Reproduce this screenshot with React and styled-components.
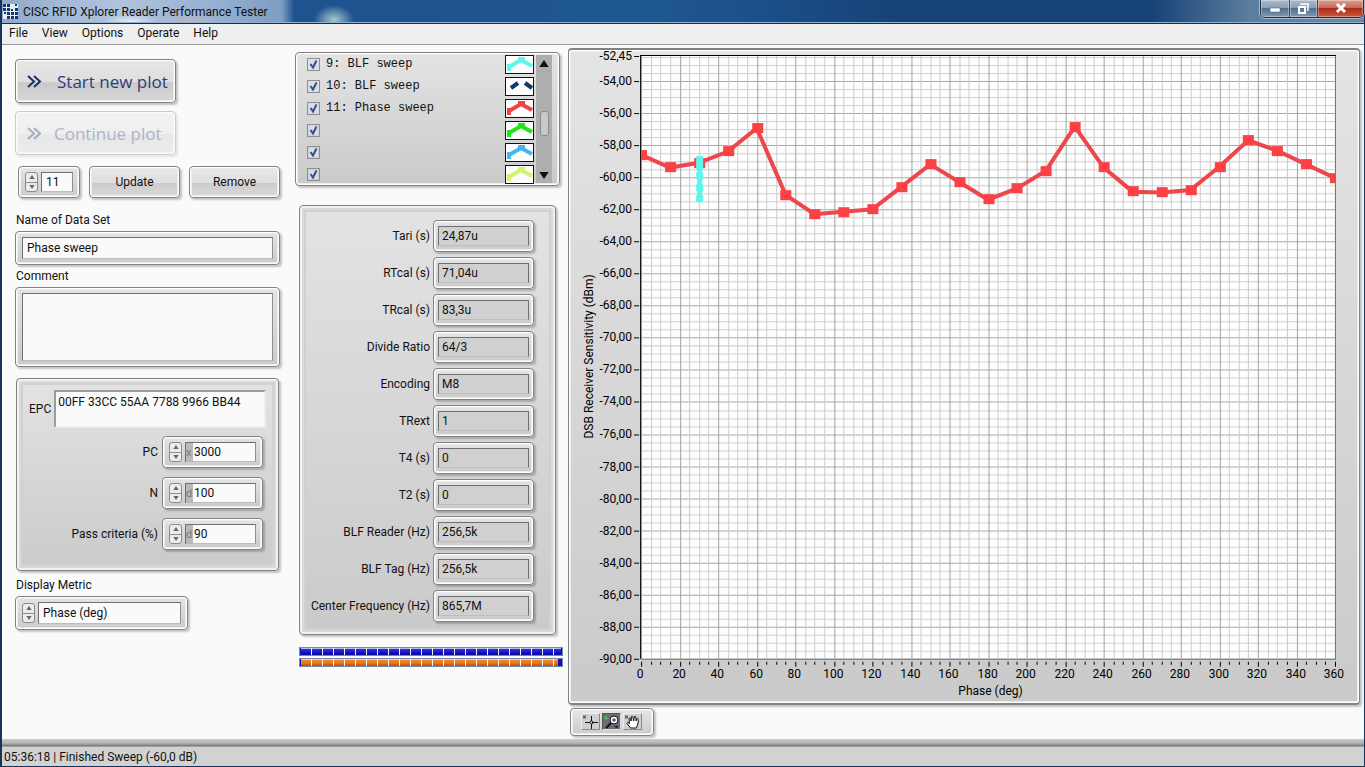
import { useState } from "react";
import styled, { createGlobalStyle, css } from "styled-components";

const colors = {
  page: "#fafafa",
  ink: "#111",
  blue: "#2f3d7c",
  frame: "#828282",
  red: "#fb4146",
  cyan: "#5ff5ea",
}

const GlobalStyle = createGlobalStyle`
  * {
    box-sizing: border-box;
  }

  body {
    margin: 0;
    background: ${colors.page};
    color: ${colors.ink};
    font: 12px/16px Roboto, "Open Sans", sans-serif;
  }

  button, input, textarea, select {
    font: inherit;
    color: inherit;
    margin: 0;
  }
`

const Window = styled.div`
  display: flex;
  flex-direction: column;
  min-height: 100vh;
  border: solid #16335a;
  border-width: 0 1px 1px 2px;
`

const TitleBar = styled.header`
  display: flex;
  align-items: center;
  gap: 5px;
  height: 24px;
  padding-left: 1px;
  border-bottom: 1px solid #12304f;
  box-shadow: inset 0 -1px #8fb0cf;
  background:
    radial-gradient(ellipse 20px 15px at 332px 20px, #a9c9cf, transparent),
    radial-gradient(ellipse 28px 8px at 128px 22px, #e2eff8, transparent),
    radial-gradient(ellipse 30px 10px at 190px 22px, #b9b6c6, transparent),
    linear-gradient(90deg, #8fa9c8 0, #a3b9d6 60px, #b0c3dc 120px, #93aecf 220px, #7d9dc2 280px, #1e538f 292px, #1e538f 430px, #1f5890 640px, #1b4f8a 760px, #174276 900px, #174276 1150px, #5d7f9f 1250px, #6a87a3 100%);
`

const AppName = styled.h1`
  flex: 1;
  margin: 0;
  font-size: 12px;
  font-weight: 400;
  line-height: 22px;
`

const Caption = styled.div`
  display: flex;
  align-self: flex-start;
  height: 18px;
  border: 1px solid #1c2f45;
  border-top: 0;
  border-radius: 0 0 5px 5px;
  box-shadow: 0 0 0 1px #a8bccf;
  overflow: hidden;
`

const CaptionButton = styled.button`
  display: flex;
  align-items: center;
  justify-content: center;
  width: ${props => props.$close ? "46px" : "28px"};
  padding: 0 0 1px;
  border: 0;
  border-left: 1px solid #33495f;
  box-shadow: inset 0 0 0 1px rgba(255, 255, 255, 0.35);
  background: ${props => props.$close
    ? "linear-gradient(#dba093 0, #c9695a 45%, #b02a18 50%, #c9563c 100%)"
    : "linear-gradient(#a9bacb 0, #8ba0b6 45%, #54708e 50%, #7f9ab3 100%)"};

  &:first-child {
    border-left: 0;
  }
`

const MenuBar = styled.nav`
  display: flex;
  gap: 14px;
  height: 21px;
  padding: 0 7px;
  background: #efefef;
  border-bottom: 1px solid #9b9b9b;

  a {
    color: inherit;
    line-height: 18px;
    text-decoration: none;
  }
`

const Content = styled.main`
  display: flex;
  flex: 1;
  align-items: flex-start;
  padding: 3px 4px 2px 13px;
`

const SideColumn = styled.section`
  display: flex;
  flex: none;
  flex-direction: column;
  align-items: flex-start;
  width: 265px;
  padding-top: 11px;
`

const MiddleColumn = styled.section`
  flex: none;
  width: 268px;
  margin: 4px 5px 0 15px;
`

const ChartColumn = styled.section`
  flex: 1;
  min-width: 0;
`

const raised = css`
  border: 1px solid ${colors.frame};
  border-radius: 4px;
  box-shadow: inset 0 0 0 1px #fff, inset 0 0 0 2px #ececec, 2px 2px 2px rgba(0, 0, 0, 0.22);
`

const BigButton = styled.button`
  display: flex;
  align-items: center;
  gap: 14px;
  width: 161px;
  height: 44px;
  margin-bottom: 8px;
  padding: 2px 0 0 10px;
  white-space: nowrap;
  ${raised}
  background: linear-gradient(#e6e6e6 0, #dedede 52%, #c9c9c9 54%, #d8d8d8 100%);
  color: ${colors.blue};
  font: 17px/24px "Open Sans", "Noto Sans", sans-serif;

  &:disabled {
    gap: 11px;
    opacity: 0.38;
  }
`

const PushButton = styled.button`
  width: 91px;
  height: 32px;
  padding: 0;
  ${raised}
  background: linear-gradient(#e8e8e8 0, #dedede 52%, #cbcbcb 54%, #dadada 100%);
`

const ButtonRow = styled.div`
  display: flex;
  gap: 9px;
  margin: 3px 0 11px 3px;
`

const Bezel = styled.div`
  display: flex;
  align-items: center;
  gap: 3px;
  width: ${props => props.$width || "100%"};
  height: ${props => props.$height || "32px"};
  padding: ${props => props.$slim ? "5px 4px" : "5px 6px"};
  ${raised}
  background: linear-gradient(#e4e4e4, #cbcbcb);
`

const SpinButtons = styled.span`
  display: flex;
  flex: none;
  flex-direction: column;
  width: 13px;
  height: 20px;
  border: 1px solid #8c8c8c;
  border-radius: 3px;
  background: #ececec;
  color: #666;
  overflow: hidden;

  button {
    display: flex;
    flex: 1;
    align-items: center;
    justify-content: center;
    padding: 0;
    border: 0;
    background: transparent;
  }

  button + button {
    border-top: 1px solid #8c8c8c;
  }
`

const fieldLook = css`
  flex: 1;
  align-self: stretch;
  min-width: 0;
  border: 1px solid #777;
  border-color: #6f6f6f #8f8f8f #bdbdbd #6f6f6f;
  border-radius: 0;
  outline: 0;
`

const Field = styled.input`
  ${fieldLook}
  padding: 0 4px;
  background: #fafafa;

  &:read-only {
    padding: 0 3px;
    border-color: #6f6f6f #6f6f6f #bdbdbd #6f6f6f;
    background: #d0d0d0;
  }
`

const Radix = styled.span`
  flex: none;
  align-self: stretch;
  width: 8px;
  margin-right: -3px;
  border: solid #6f6f6f;
  border-width: 1px 0 0 1px;
  background: #b9b9b9;
  color: #777;
  font-size: 11px;
  line-height: 19px;

  & + input {
    padding-left: 1px;
    border-left: 0;
  }
`

const Area = styled.textarea`
  ${fieldLook}
  padding: 0 4px;
  background: #fafafa;
  resize: none;
`

const Metric = styled.select`
  ${fieldLook}
  appearance: none;
  padding: 0 4px;
  background: #fafafa;
`

const FieldLabel = styled.label`
  display: block;
  height: 16px;
  margin: 3px 0 3px 1px;
`

const Cluster = styled.div`
  ${raised}
  box-shadow: inset 0 0 0 2px #f2f2f2, inset 0 0 0 4px #d9d9d9, inset 0 0 0 6px #d0d0d0, 2px 2px 2px rgba(0, 0, 0, 0.22);
  background: linear-gradient(#e3e3e3, #cacaca);
`

const TagCluster = styled(Cluster)`
  width: 263px;
  height: 193px;
  margin: 11px 0 3px 1px;
  padding: 11px 12px;
`

const EpcRow = styled.div`
  display: flex;
  align-items: center;
  gap: 3px;
  height: 38px;
  margin-bottom: 8px;

  textarea {
    height: 38px;
    padding: 2px;
    border: 2px solid #9c9c9c;
    border-color: #9c9c9c #ededed #ededed #9c9c9c;
  }
`

const NumberRow = styled.div`
  display: flex;
  align-items: center;
  justify-content: flex-end;
  gap: 4px;
  margin: 0 3px 9px 0;
`

const TraceList = styled.div`
  display: flex;
  width: 265px;
  height: 134px;
  padding: 0 7px 0 11px;
  ${raised}
  background: linear-gradient(#e3e3e3, #cacaca);
`

const Traces = styled.ul`
  flex: 1;
  margin: 0;
  padding: 0;
  list-style: none;
`

const Trace = styled.li`
  display: flex;
  align-items: center;
  height: 22px;
  padding-right: 2px;

  label {
    display: flex;
    flex: 1;
    align-items: center;
    gap: 6px;
    font: 12px/16px "Liberation Mono", monospace;
  }
`

const Tick = styled.input`
  appearance: none;
  width: 13px;
  height: 13px;
  border: 1px solid #8e8f8f;
  background: #f4f5f8;

  &:checked {
    background: url("data:image/svg+xml,%3Csvg xmlns='http://www.w3.org/2000/svg' viewBox='0 0 11 11'%3E%3Crect x='1' y='1' width='9' height='9' fill='%23d5dcea'/%3E%3Cpath d='M2.5 5L5 8.5L8.5 1.5' fill='none' stroke='%233b4f86' stroke-width='2'/%3E%3C/svg%3E");
  }
`

const Scroll = styled.div`
  display: flex;
  flex-direction: column;
  align-items: center;
  width: 16px;
  margin: 2px 0;
  background: #aeaeae;

  button {
    width: 16px;
    height: 16px;
    padding: 0;
    border: 0;
    background: transparent;
    line-height: 0;
  }
`

const Thumb = styled.span`
  width: 9px;
  height: 25px;
  margin: 40px 0 auto;
  border: 1px solid #8b8b8b;
  border-radius: 3px;
  background: #c9c9c9;
`

const Timing = styled(Cluster)`
  display: flex;
  flex-direction: column;
  gap: 5px;
  width: 257px;
  height: 430px;
  margin: 19px 0 12px 4px;
  padding: 14px 21px 0 0;
`

const TimingRow = styled.div`
  display: flex;
  align-items: center;
  justify-content: flex-end;
  gap: 3px;
`

const Gauge = styled.div`
  width: 264px;
  height: 9px;
  margin: 0 0 2px 4px;
  padding: 0 1px;
  border: 1px solid #7c86a8;
  background: #1212b4;
`

const GaugeFill = styled.div`
  height: 100%;
  background:
    repeating-linear-gradient(90deg, transparent 0 10px, #f4f4fb 10px 11px),
    ${props => props.$orange ? "linear-gradient(#d8cfc8 1px, #f08a35 1px, #e8761c 60%, #a85514)" : "linear-gradient(#b9bde0 1px, #2a35e0 1px, #1313d0 60%, #0a0a90)"};
`

const ChartPanel = styled.div`
  ${raised}
  border-width: 2px 1px 2px 1px;
  padding: 0 1px;
  background: linear-gradient(#e4e4e4, #cacaca);

  svg {
    display: block;
    width: 100%;
    height: auto;
    overflow: visible;
  }
`

const Palette = styled.div`
  display: flex;
  align-items: center;
  gap: 2px;
  width: 84px;
  height: 28px;
  margin: 3px 0 0 2px;
  padding-left: 10px;
  ${raised}
  background: linear-gradient(#e6e6e6, #cccccc);
`

const Tool = styled.button`
  width: 19px;
  height: 17px;
  padding: 0;
  border: 1px solid #eee;
  border-color: ${props => props.$active ? "#555 #ddd #ddd #555" : "#eee #888 #888 #eee"};
  background: ${props => props.$active ? "#6c6c74" : "#cfcfcf"};
  line-height: 0;
`

const StatusBar = styled.footer`
  height: 27px;
  padding: 10px 0 0 2px;
  background: linear-gradient(#cbcbcb 0, #b5b5b5 4px, #8f8f8f 6px, #6f6f6f 7px, #d2d2d2 8px, #d2d2d2 100%);
`

const timings = [
  ["Tari (s)", "24,87u"],
  ["RTcal (s)", "71,04u"],
  ["TRcal (s)", "83,3u"],
  ["Divide Ratio", "64/3"],
  ["Encoding", "M8"],
  ["TRext", "1"],
  ["T4 (s)", "0"],
  ["T2 (s)", "0"],
  ["BLF Reader (Hz)", "256,5k"],
  ["BLF Tag (Hz)", "256,5k"],
  ["Center Frequency (Hz)", "865,7M"],
]

const traces = [
  { name: "9: BLF sweep", color: colors.cyan },
  { name: "10: BLF sweep", color: "#17376b", dashed: true },
  { name: "11: Phase sweep", color: "#ee4449" },
  { name: "", color: "#1fe51f" },
  { name: "", color: "#4ab4ee" },
  { name: "", color: "#cdf56e" },
]

// sensitivity in dBm, one sample every 15 degrees
const sweep = [
  -58.6, -59.4, -59.1, -58.4, -56.95, -61.1, -62.3, -62.15, -62.0, -60.6, -59.2, -60.3, -61.4,
  -60.7, -59.6, -56.85, -59.4, -60.9, -60.95, -60.8, -59.35, -57.7, -58.35, -59.2, -60.05,
]

const blf = [-58.9, -59.3, -59.9, -60.6, -61.3]

const plot = { left: 71, top: 6, width: 693, height: 602 }
plot.right = plot.left + plot.width
plot.bottom = plot.top + plot.height

const toX = deg => plot.left + deg * (plot.width / 360)
const toY = dbm => plot.top + (-52.45 - dbm) * (plot.height / 37.55)
const crisp = value => Math.round(value) + 0.5

function range(from, to, step) {
  const out = []
  for (let value = from; value <= to; value += step) out.push(value)
  return out
}

function Chart() {
  const degs = range(0, 360, 5)
  const levels = range(-90, -52.5, 0.5)
  const labels = [-52.45, ...range(-90, -54, 2)]

  return (
    <svg viewBox="0 0 787 652" role="img" aria-label="DSB Receiver Sensitivity over Phase">
      <clipPath id="plot-area">
        <rect x={plot.left} y={plot.top} width={plot.width} height={plot.height} />
      </clipPath>
      <rect x={plot.left} y={plot.top} width={plot.width} height={plot.height} fill="#fdfdfd" />
      {levels.map(v => (
        <path key={v} d={`M${plot.left} ${crisp(toY(v))}H${plot.right}`} stroke={v % 2 === 0 ? "#a9a9a9" : "#d0d0d0"} />
      ))}
      {degs.map(v => (
        <path key={v} d={`M${crisp(toX(v))} ${plot.top}V${plot.bottom}`} stroke={v % 20 === 0 ? "#a3a3a3" : "#cbcbcb"} />
      ))}
      <path d={`M${plot.left} ${plot.bottom}.5H${plot.right}.5V${plot.top}`} fill="none" stroke="#777" />
      <path d={`M70.5 ${plot.bottom}V5.5H${plot.right + 1}`} fill="none" stroke="#000" />
      {labels.map(v => (
        <g key={v}>
          <path d={`M64 ${crisp(toY(v))}H69`} stroke="#000" />
          <text x="62" y={Math.round(toY(v)) + 4} textAnchor="end">{v.toFixed(2).replace(".", ",")}</text>
        </g>
      ))}
      {degs.map(v => (
        <path key={v} d={`M${crisp(toX(v))} 611V${v % 20 === 0 ? 616 : 614}`} stroke="#000" />
      ))}
      {range(0, 360, 20).map(v => (
        <text key={v} x={Math.round(toX(v)) - 1} y="627" textAnchor="middle">{v}</text>
      ))}
      <text x="420" y="644" textAnchor="middle">Phase (deg)</text>
      <text transform="translate(23 306) rotate(-90)" textAnchor="middle">DSB Receiver Sensitivity (dBm)</text>
      <g clipPath="url(#plot-area)">
        <polyline points={sweep.map((v, i) => `${toX(i * 15)},${toY(v)}`).join(" ")} fill="none" stroke="#ec474b" strokeWidth="4" />
        {sweep.map((v, i) => (
          <rect key={i} x={Math.round(toX(i * 15)) - 5} y={Math.round(toY(v)) - 5} width="11" height="10" fill={colors.red} />
        ))}
        <path d={`M${crisp(toX(30))} ${toY(-58.9)}V${toY(-61.3)}`} stroke={colors.cyan} strokeWidth="5" />
        {blf.map(v => (
          <rect key={v} x={Math.round(toX(30)) - 3} y={Math.round(toY(v)) - 3} width="7" height="7" fill={colors.cyan} />
        ))}
      </g>
    </svg>
  )
}

function Swatch({ color, dashed }) {
  return (
    <svg width="29" height="19">
      <rect x="0.5" y="0.5" width="28" height="18" fill="#fdfdfd" stroke="#111" />
      {dashed ? (
        <path d="M6 11L13 6M20 6L27 11" stroke={color} strokeWidth="4" />
      ) : (
        <>
          <path d="M4 12L16 5L27 11" fill="none" stroke={color} strokeWidth="4" />
          <path d="M2 9h4v7H2zM13 2h7v5h-7z" fill={color} />
        </>
      )}
    </svg>
  )
}

function Arrow({ down, size = 5 }) {
  return (
    <svg width={size * 2} height={size} viewBox="0 0 10 6" fill="currentColor">
      <path d={down ? "M1 0H9L5 6Z" : "M1 6H9L5 0Z"} />
    </svg>
  )
}

function Spinner({ label }) {
  return (
    <SpinButtons>
      <button type="button" aria-label={`Increase ${label}`}><Arrow size={4} /></button>
      <button type="button" aria-label={`Decrease ${label}`}><Arrow size={4} down /></button>
    </SpinButtons>
  )
}

function Chevrons() {
  return (
    <svg width="17" height="16" fill="none" stroke="#143469" strokeWidth="2">
      <path d="M2 2L8 7.500L2 13M8 2L14 7.500L8 13" />
    </svg>
  )
}

function NumberField({ id, label, radix, value }) {
  return (
    <NumberRow>
      <label htmlFor={id}>{label}</label>
      <Bezel $width="101px">
        <Spinner label={label} />
        <Radix>{radix}</Radix>
        <Field id={id} defaultValue={value} />
      </Bezel>
    </NumberRow>
  )
}

function TraceRow({ name, index, color, dashed }) {
  const [on, setOn] = useState(true)
  return (
    <Trace>
      <label>
        <Tick type="checkbox" aria-label={name || `Plot ${index + 9}`} checked={on} onChange={() => setOn(!on)} />
        {name}
      </label>
      <Swatch color={color} dashed={dashed} />
    </Trace>
  )
}

function Logo() {
  return (
    <svg width="15" height="15">
      <rect width="15" height="15" fill="#e8eef5" />
      <path
        d="M0 0h3v3H0zM4 0h3v3H4zM12 0h2v2h-2zM0 4h3v3H0zM4 4h3v3H4zM8 5h2v2H8zM12 4h3v3h-3zM1 8h2v2H1zM4 8h3v3H4zM8 8h3v3H8zM12 8h3v3h-3zM4 12h3v3H4zM8 12h3v3H8zM12 12h3v3h-3z"
        fill="#17366b"
      />
    </svg>
  )
}

export default function App() {
  return (
    <>
      <GlobalStyle />
      <Window>
        <TitleBar>
          <Logo />
          <AppName>CISC RFID Xplorer Reader Performance Tester</AppName>
          <Caption>
            <CaptionButton aria-label="Minimize">
              <svg width="12" height="12"><rect x="1" y="6" width="10" height="4" fill="#fff" stroke="#44566a" strokeWidth="0.5" /></svg>
            </CaptionButton>
            <CaptionButton aria-label="Restore">
              <svg width="13" height="13" fill="none" stroke="#fff" strokeWidth="2">
                <path d="M4 3V2H11V8H10" strokeWidth="1.5" />
                <path d="M2 5H8V11H2Z" />
              </svg>
            </CaptionButton>
            <CaptionButton $close aria-label="Close">
              <svg width="12" height="12" stroke="#fff" strokeWidth="3"><path d="M2 2L10 10M10 2L2 10" /></svg>
            </CaptionButton>
          </Caption>
        </TitleBar>
        <MenuBar>
          <a href="#file">File</a>
          <a href="#view">View</a>
          <a href="#options">Options</a>
          <a href="#operate">Operate</a>
          <a href="#help">Help</a>
        </MenuBar>
        <Content>
          <SideColumn>
            <BigButton><Chevrons />Start new plot</BigButton>
            <BigButton disabled><Chevrons />Continue plot</BigButton>
            <ButtonRow>
              <Bezel $width="62px">
                <Spinner label="data set" />
                <Field aria-label="Data set" defaultValue="11" />
              </Bezel>
              <PushButton>Update</PushButton>
              <PushButton>Remove</PushButton>
            </ButtonRow>
            <FieldLabel htmlFor="name">Name of Data Set</FieldLabel>
            <Bezel $height="34px">
              <Field id="name" defaultValue="Phase sweep" />
            </Bezel>
            <FieldLabel htmlFor="comment">Comment</FieldLabel>
            <Bezel $height="80px">
              <Area id="comment" />
            </Bezel>
            <TagCluster>
              <EpcRow>
                <label htmlFor="epc">EPC</label>
                <Area id="epc" defaultValue="00FF 33CC 55AA 7788 9966 BB44" />
              </EpcRow>
              <NumberField id="pc" label="PC" radix="x" value="3000" />
              <NumberField id="n" label="N" radix="d" value="100" />
              <NumberField id="pass" label="Pass criteria (%)" radix="d" value="90" />
            </TagCluster>
            <FieldLabel htmlFor="metric">Display Metric</FieldLabel>
            <Bezel $width="173px" $height="34px">
              <Spinner label="metric" />
              <Metric id="metric"><option>Phase (deg)</option></Metric>
            </Bezel>
          </SideColumn>
          <MiddleColumn>
            <TraceList>
              <Traces>
                {traces.map((trace, i) => <TraceRow key={i} index={i} {...trace} />)}
              </Traces>
              <Scroll>
                <button type="button" aria-label="Scroll up"><Arrow size={7} /></button>
                <Thumb />
                <button type="button" aria-label="Scroll down"><Arrow size={7} down /></button>
              </Scroll>
            </TraceList>
            <Timing>
              {timings.map(([label, value]) => (
                <TimingRow key={label}>
                  <label htmlFor={label}>{label}</label>
                  <Bezel $slim $width="101px">
                    <Field id={label} readOnly value={value} />
                  </Bezel>
                </TimingRow>
              ))}
            </Timing>
            <Gauge><GaugeFill style={{ width: "100%" }} /></Gauge>
            <Gauge><GaugeFill $orange style={{ width: "99%" }} /></Gauge>
          </MiddleColumn>
          <ChartColumn>
            <ChartPanel><Chart /></ChartPanel>
            <Palette>
              <Tool aria-label="Cursor">
                <svg width="17" height="15" fill="none" stroke="#111">
                  <path d="M1 3h3" stroke="#66704f" strokeWidth="3" />
                  <path d="M3 8.500h5M10 8.500h6M9.500 2v5M9.500 10v5" />
                  <circle cx="9.5" cy="8.5" r="1.5" />
                </svg>
              </Tool>
              <Tool $active aria-label="Zoom">
                <svg width="17" height="15" fill="none" stroke="#111">
                  <path d="M1 4h4M3 2v4" stroke="#4ccc4c" />
                  <circle cx="11" cy="6" r="4" fill="#fff" />
                  <path d="M9 6h4M11 4v4" stroke="#222a66" />
                  <path d="M8 9L3 14" strokeWidth="2" />
                  <path d="M11 12h5l-2.500 2z" fill="#111" stroke="none" />
                </svg>
              </Tool>
              <Tool aria-label="Pan">
                <svg width="17" height="15" fill="#fff" stroke="#111">
                  <path d="M1 3h3" stroke="#66704f" strokeWidth="3" />
                  <path d="M6.500 14L3 9.500Q3 7.500 5.500 9.500L5 4.500Q6.500 2.500 7 7L7.500 2.500Q9 .5 9.500 7L10.500 2.500Q12 1 12 7L13 4.500Q15 4 14 9L12.500 14Z" />
                </svg>
              </Tool>
            </Palette>
          </ChartColumn>
        </Content>
        <StatusBar>05:36:18 | Finished Sweep (-60,0 dB)</StatusBar>
      </Window>
    </>
  )
}
